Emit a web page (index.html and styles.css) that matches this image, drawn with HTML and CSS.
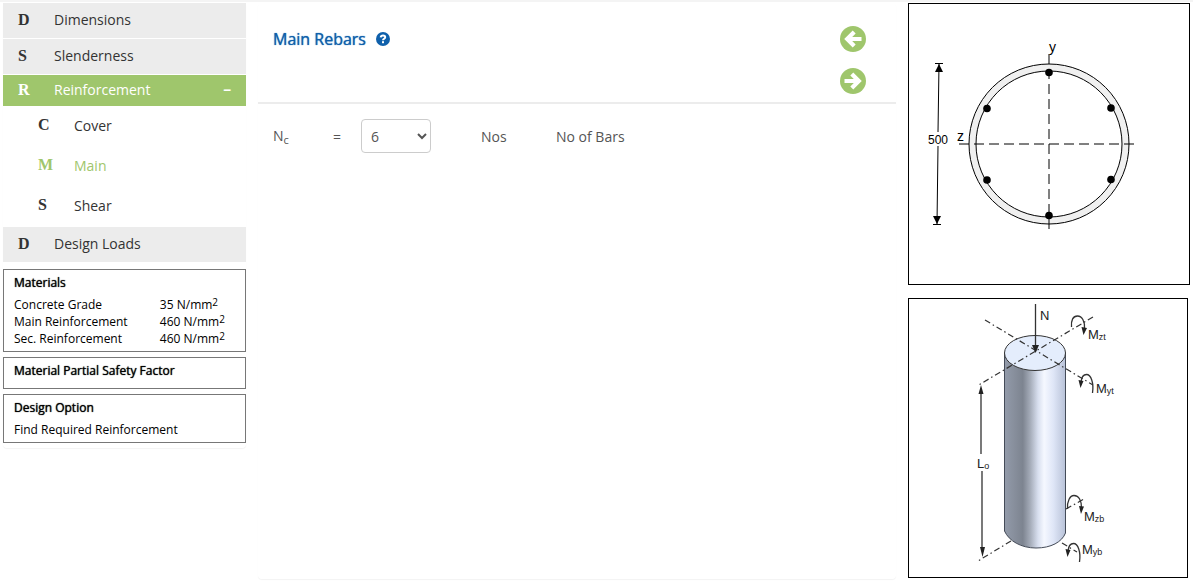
FILE: index.html
```html
<!DOCTYPE html>
<html lang="en">
<head>
  <meta charset="utf-8">
  <title>Column Design - Main Rebars</title>
  <link rel="stylesheet" href="styles.css">
</head>
<body>

  <div class="page">

    <aside class="sidebar">
      <nav>
        <ul class="menu">
          <li><a href="#dimensions"><b>D</b>Dimensions</a></li>
          <li><a href="#slenderness"><b>S</b>Slenderness</a></li>
          <li class="open">
            <a href="#reinforcement"><b>R</b>Reinforcement<span class="toggle">−</span></a>
            <ul class="submenu">
              <li><a href="#cover"><b>C</b>Cover</a></li>
              <li><a href="#main" class="active"><b>M</b>Main</a></li>
              <li><a href="#shear"><b>S</b>Shear</a></li>
            </ul>
          </li>
          <li><a href="#loads"><b>D</b>Design Loads</a></li>
        </ul>
      </nav>

      <section class="info">
        <h3>Materials</h3>
        <table>
          <tr><td>Concrete Grade</td><td>35 N/mm<sup>2</sup></td></tr>
          <tr><td>Main Reinforcement</td><td>460 N/mm<sup>2</sup></td></tr>
          <tr><td>Sec. Reinforcement</td><td>460 N/mm<sup>2</sup></td></tr>
        </table>
      </section>
      <section class="info">
        <h3>Material Partial Safety Factor</h3>
      </section>
      <section class="info">
        <h3>Design Option</h3>
        <p>Find Required Reinforcement</p>
      </section>
    </aside>

    <main class="content" id="main">
      <header class="content-head">
        <h2>Main Rebars
          <button type="button" class="icon-btn help" aria-label="Help">
            <svg viewBox="0 0 14 14" width="14" height="14">
              <circle cx="7" cy="7" r="7" fill="#0f60ab"/>
              <path d="M4.700 5.400C4.900 4 5.800 3.500 7 3.500c1.200 0 2.200.7 2.200 1.800 0 1.500-2.200 1.400-2.200 3" fill="none" stroke="#fff" stroke-width="2"/>
              <rect x="6" y="9.200" width="2" height="2" fill="#fff"/>
            </svg>
          </button>
        </h2>
        <div class="steps">
          <button type="button" class="icon-btn" aria-label="Previous">
            <svg viewBox="0 0 26 26" width="26" height="26">
              <circle cx="13" cy="13" r="13" fill="#9fc66c"/>
              <path d="M14.200 6L7.200 13l7 7M7.500 13H21.500" fill="none" stroke="#fff" stroke-width="4.200"/>
            </svg>
          </button>
          <button type="button" class="icon-btn" aria-label="Next">
            <svg viewBox="0 0 26 26" width="26" height="26">
              <circle cx="13" cy="13" r="13" fill="#9fc66c"/>
              <path d="M11.800 6L18.800 13l-7 7M18.500 13H4.500" fill="none" stroke="#fff" stroke-width="4.200"/>
            </svg>
          </button>
        </div>
      </header>

      <form class="field">
        <label for="bars">N<sub>c</sub></label>
        <span>=</span>
        <select id="bars" name="bars">
          <option>4</option>
          <option>5</option>
          <option selected>6</option>
          <option>7</option>
          <option>8</option>
        </select>
        <span>Nos</span>
        <span>No of Bars</span>
      </form>
    </main>

    <aside class="figures">
      <!-- Cross section -->
      <figure>
        <svg class="section" viewBox="0 0 280 280">
          <circle cx="140" cy="140" r="80" fill="#f0f0f0" stroke="#000"/>
          <circle cx="140" cy="140" r="73" fill="#fff" stroke="#000"/>
          <g stroke="#000" stroke-dasharray="10 5">
            <path d="M140 50V225"/>
            <path d="M50 140H225"/>
          </g>
          <circle cx="140" cy="68.500" r="3.800"/>
          <circle cx="78" cy="104.500" r="3.800"/>
          <circle cx="202" cy="104" r="3.800"/>
          <circle cx="78" cy="176" r="3.800"/>
          <circle cx="202" cy="175.500" r="3.800"/>
          <circle cx="140" cy="211.500" r="3.800"/>
          <path d="M30 60L29 128M29 142L28 220M26 59.500h8M24 220.500h8" stroke="#000" fill="none"/>
          <path d="M30 60l4 8h-8zM28 220l4-8h-8z"/>
          <text x="19" y="140">500</text>
          <text class="axis" x="48" y="137">z</text>
          <text class="axis" x="140" y="48">y</text>
        </svg>
      </figure>

      <!-- Column with applied load and moments -->
      <figure class="narrow">
        <svg class="column" viewBox="0 0 278 278">
          <defs>
            <linearGradient id="steel">
              <stop offset="0" stop-color="#939baa"/>
              <stop offset=".3" stop-color="#7d8490"/>
              <stop offset=".42" stop-color="#a4abb8"/>
              <stop offset=".55" stop-color="#d8dfef"/>
              <stop offset=".65" stop-color="#f5f8ff"/>
              <stop offset=".8" stop-color="#dfe6f7"/>
              <stop offset="1" stop-color="#b8c2d8"/>
            </linearGradient>
          </defs>
          <path d="M95.500 54V232C100 242 112 249 127 249C142 249 153 243 156.500 234V54z" fill="url(#steel)" stroke="#444b58"/>
          <ellipse cx="126" cy="54" rx="30.500" ry="17.500" fill="#e4edfc" stroke="#333"/>
          <g stroke="#333" stroke-width="1.200" stroke-dasharray="6 3 1.500 3" fill="none">
            <path d="M76 21L184 86"/>
            <path d="M184 18L68 87"/>
            <path d="M157 210L175 200"/>
            <path d="M153 244L168 253"/>
            <path d="M102 242L69 262"/>
          </g>
          <g stroke="#333" stroke-width="1.300" fill="none">
            <path d="M126.500 5V48"/>
            <path d="M72 90V155M73 172V252"/>
            <path d="M162.500 28C162 21 164 17 168.500 17C173 17 176 22 175.500 30"/>
            <path d="M183.500 94C185 84 182 75.500 177.500 75.500C174 75.500 172.500 78 172 83"/>
            <path d="M158.500 210C158 202 161 196.500 165 196.500C170 196.500 172.500 202 172.500 209"/>
            <path d="M170.500 263C172 253 169 244.500 164.500 244.500C161 244.500 159.500 247 159 252"/>
          </g>
          <g fill="#222">
            <path d="M126.500 54l-3.500-8h7z"/>
            <path d="M72 86l-2.500 9h5zM73.500 258l-2.500-10h5z"/>
            <path d="M174.500 36l-2-8 5.500 1zM171.500 89l-2-8 5 1zM172 215l-2-8 5 .5zM158.500 258l-2-8 5 1z"/>
          </g>
          <text x="131" y="21">N</text>
          <text x="179" y="40">M<tspan class="sub" dy="1">zt</tspan></text>
          <text x="187" y="94">M<tspan class="sub" dy="1">yt</tspan></text>
          <text x="68" y="169">L<tspan class="sub" dy="1">o</tspan></text>
          <text x="175" y="222">M<tspan class="sub" dy="1">zb</tspan></text>
          <text x="173" y="255">M<tspan class="sub" dy="1">yb</tspan></text>
        </svg>
      </figure>
    </aside>

  </div>

</body>
</html>
```
FILE: styles.css
```css
* {
  box-sizing: border-box;
}

body {
  margin: 0;
  border-top: 2px solid #f4f4f4;
  background: #fff;
  color: #333;
  font-family: "Open Sans", sans-serif;
  font-size: 14px;
}

h2, h3, p, ul, figure {
  margin: 0;
  padding: 0;
}

.page {
  display: grid;
  grid-template-columns: 243px 1fr 282px;
  gap: 12px;
  min-height: calc(100vh - 2px);
  padding: 1px 3px 3px;
}

/* Left menu */
.sidebar {
  align-self: start;
  padding-bottom: 5px;
  border-radius: 4px;
  box-shadow: 0 1px 1px rgba(0, 0, 0, 0.05);
}

.menu, .submenu {
  list-style: none;
}

.menu {
  display: grid;
  gap: 1px;
  margin-bottom: 7px;
}

.menu a {
  display: flex;
  align-items: center;
  height: 35px;
  padding: 0 15px 2px;
  background: #ececec;
  color: #333;
  text-decoration: none;
}

.menu b {
  width: 36px;
  font-family: "Liberation Serif", serif;
  font-size: 16px;
}

.menu .open > a {
  height: 31px;
  background: #9fc66c;
  color: #fff;
}

.toggle {
  margin-left: auto;
  font-weight: bold;
}

.menu .submenu a {
  height: 40px;
  padding-left: 35px;
  background: none;
}

.menu .submenu a.active {
  color: #9fc66c;
}

/* Summary boxes */
.info {
  margin-bottom: 5px;
  padding: 4px 10px;
  border: 1px solid #777;
  color: #000;
  font-size: 12px;
  line-height: 17px;
}

.info:last-child {
  margin-bottom: 0;
}

.info h3 {
  padding-bottom: 5px;
  font-size: 12px;
  font-weight: 500;
  text-shadow: 0 0 1px #000;
}

.info table {
  width: 100%;
  border-collapse: collapse;
}

.info td {
  width: 40%;
  padding: 0;
}

.info td:first-child {
  width: 66%;
}

.info sup {
  font-size: 10px;
  line-height: 0;
  vertical-align: 3px;
}

/* Centre panel */
.content {
  border-radius: 4px;
  box-shadow: 0 1px 1px rgba(0, 0, 0, 0.05);
}

.content-head {
  display: flex;
  justify-content: space-between;
  padding: 23px 30px 8px 15px;
  border-bottom: 2px solid #ececec;
}

.content-head h2 {
  display: flex;
  align-items: center;
  gap: 10px;
  height: 26px;
  color: #0f60ab;
  font-size: 16px;
  font-weight: 500;
  text-shadow: 0 0 1px #0f60ab;
}

.icon-btn {
  display: block;
  padding: 0;
  border: none;
  background: none;
  cursor: pointer;
}

.icon-btn svg {
  display: block;
}

.steps {
  display: grid;
  gap: 16px;
}

.field {
  display: grid;
  grid-template-columns: 60px 28px 120px 75px 1fr;
  align-items: center;
  padding: 15px;
  color: #555;
}

.field label {
  padding-bottom: 2px;
}

.field sub {
  font-size: 11px;
  line-height: 0;
  vertical-align: -3px;
}

.field select {
  width: 70px;
  height: 34px;
  padding: 6px 5px;
  border: 1px solid #ccc;
  border-radius: 4px;
  background: #fff;
  color: #555;
  font-family: inherit;
  font-size: 14px;
}

/* Drawings */
.figures figure {
  margin-bottom: 13px;
  border: 1px solid #000;
}

.figures .narrow {
  margin: 0 2px 0 0;
}

.figures svg {
  display: block;
  width: 100%;
}

.section text {
  font-family: "Liberation Sans", sans-serif;
  font-size: 12px;
}

.section .axis {
  font-size: 14px;
}

.column text {
  fill: #222;
  font-family: "Liberation Sans", sans-serif;
  font-size: 13px;
}

.column .sub {
  font-size: 9px;
}
```
